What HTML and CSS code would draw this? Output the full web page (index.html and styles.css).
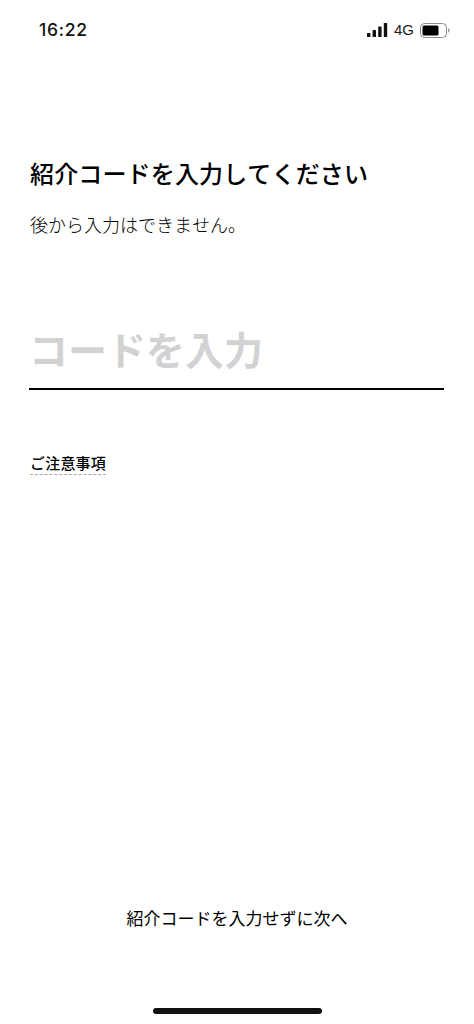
FILE: index.html
```html
<!DOCTYPE html>
<html lang="ja">
<head>
<meta charset="utf-8">
<title>紹介コードを入力</title>
<link rel="stylesheet" href="styles.css">
</head>
<body>
<div class="screen">
  <header class="status">
    <span class="time">16:22</span>
    <div class="indicators">
      <svg class="signal" width="21" height="14" viewBox="0 0 21 14"><rect x="0" y="10" width="3.4" height="4" rx=".6"/><rect x="5.6" y="7" width="3.4" height="7" rx=".6"/><rect x="11.2" y="3.5" width="3.4" height="10.5" rx=".6"/><rect x="16.8" y="0" width="3.4" height="14" rx=".6"/></svg>
      <span class="net">4G</span>
      <svg class="battery" width="30" height="15" viewBox="0 0 30 15"><rect x=".5" y=".5" width="26" height="14" rx="4" fill="none" stroke="#8a8a8a"/><rect x="2.5" y="2.5" width="16" height="10" rx="1.5" fill="#000"/><rect x="28" y="5.5" width="1.4" height="4" rx=".7" fill="#9a9a9a"/></svg>
    </div>
  </header>
  <main class="content">
    <h1 class="title">紹介コードを入力してください</h1>
    <p class="sub">後から入力はできません。</p>
    <div class="field"><span class="placeholder">コードを入力</span></div>
    <a class="notes">ご注意事項</a>
  </main>
  <footer class="foot">
    <a class="skip">紹介コードを入力せずに次へ</a>
    <div class="home"></div>
  </footer>
</div>
</body>
</html>
```
FILE: styles.css
```css
* { box-sizing: border-box; }
html, body { margin: 0; padding: 0; background: #fff; }
body { font-family: "Noto Sans CJK JP", "Noto Sans", sans-serif; color: #000; font-kerning: none; }
.screen { width: 474px; height: 1024px; display: flex; flex-direction: column; overflow: hidden; }
.status { height: 60px; flex: none; display: flex; justify-content: space-between; align-items: flex-start; padding: 19px 24px 0 39px; }
.time { font-family: Inter, "Liberation Sans", sans-serif; font-size: 17.5px; font-weight: 500; line-height: 22px; letter-spacing: .7px; color: #111; }
.indicators { display: flex; align-items: center; height: 22px; }
.signal { fill: #111; margin-right: 6px; }
.net { font-family: "Liberation Sans", sans-serif; font-size: 15px; line-height: 22px; color: #222; margin-right: 6px; }
.content { flex: 1; padding: 0 30px; display: flex; flex-direction: column; align-items: flex-start; }
.title { margin: 97px 0 0; font-size: 24px; line-height: 32px; font-weight: 500; letter-spacing: .15px; white-space: nowrap; }
.sub { margin: 22px 0 0; font-size: 18px; line-height: 26px; font-weight: 300; color: #000; white-space: nowrap; }
.field { margin: 71px 0 0 -1px; width: 415px; height: 82px; border-bottom: 2px solid #000; padding: 17px 0 0; }
.placeholder { display: block; font-size: 39px; line-height: 46px; font-weight: 700; color: #d2d2d2; white-space: nowrap; }
.notes { margin-top: 62px; font-size: 15px; line-height: 22px; font-weight: 500; letter-spacing: .2px; border-bottom: 1px dashed #aaa; white-space: nowrap; }
.foot { flex: none; height: 122px; display: flex; flex-direction: column; align-items: center; }
.skip { margin-top: 4px; font-size: 17px; line-height: 24px; font-weight: 400; color: #000; white-space: nowrap; }
.home { width: 169px; height: 6px; border-radius: 3px; background: #111; margin-top: 78px; }
```
